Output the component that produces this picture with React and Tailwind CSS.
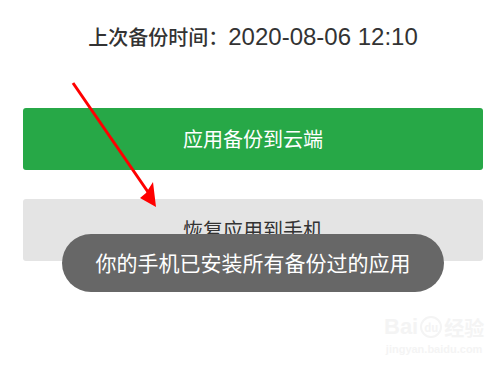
import React from "react";

export default function App() {
  return (
    <div className="relative w-[500px] h-[370px] overflow-hidden bg-white pl-[23px] pr-[17px] font-['Noto_Sans_CJK_SC',sans-serif]">
      <div className="h-[76px] flex items-baseline justify-center pt-[22px] text-[#333333]">
        <span className="text-[20px] font-medium leading-[30px]">上次备份时间：</span>
        <span className="text-[24px] leading-[30px] font-['Liberation_Sans','Noto_Sans_CJK_SC',sans-serif]">2020-08-06 12:10</span>
      </div>
      <div className="mt-[32px] h-[62px] rounded-[3px] bg-[#27a847] flex items-center justify-center text-white text-[20px]">
        应用备份到云端
      </div>
      <div className="mt-[29px] h-[62px] rounded-[3px] bg-[#e4e4e4] flex items-center justify-center text-[#333333] text-[20px]">
        恢复应用到手机
      </div>

      <div className="absolute left-[62px] top-[234px] w-[382px] h-[58px] rounded-full bg-[#676767] flex items-center justify-center text-white text-[21px]">
        你的手机已安装所有备份过的应用
      </div>

      <svg className="absolute left-0 top-0 pointer-events-none" width="500" height="370">
        <line x1="73" y1="83" x2="148" y2="192" stroke="#ff0000" strokeWidth="3" />
        <polygon points="156,207 140,198 146,193 153,182" fill="#ff0000" />
      </svg>

      <div className="absolute left-[384px] top-[316px] flex flex-col items-center text-[#f4f4f4]">
        <div className="flex items-end gap-[2px] leading-none">
          <span className="text-[22px] font-bold font-['Liberation_Sans',sans-serif]">Bai</span>
          <span className="w-[22px] h-[22px] rounded-full border-2 border-[#f4f4f4] text-[11px] font-bold flex items-center justify-center">du</span>
          <span className="text-[20px] font-bold">经验</span>
        </div>
        <div className="text-[11px] font-bold leading-none mt-[6px] font-['Liberation_Sans',sans-serif]">jingyan.baidu.com</div>
      </div>
    </div>
  );
}
